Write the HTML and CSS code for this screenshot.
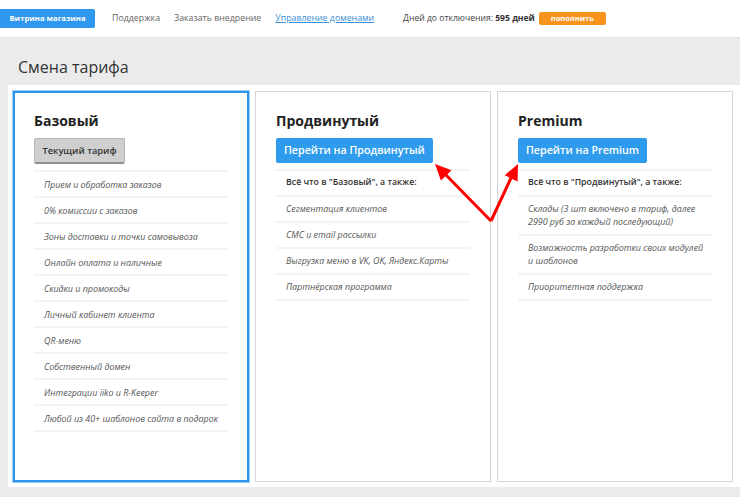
FILE: index.html
```html
<!DOCTYPE html>
<html lang="ru">
<head>
  <meta charset="UTF-8">
  <meta name="viewport" content="width=device-width, initial-scale=1.0">
  <title>Смена тарифа</title>
  <link rel="stylesheet" href="styles.css">
</head>
<body>
  <header class="topbar">
    <a class="brand" href="#">Витрина магазина</a>
    <nav class="menu">
      <a href="#">Поддержка</a>
      <a href="#">Заказать внедрение</a>
      <a class="link" href="#">Управление доменами</a>
    </nav>
    <div class="days">Дней до отключения: <b>595 дней</b></div>
    <a class="topup" href="#">пополнить</a>
  </header>

  <main class="page">
    <h1 class="page-title">Смена тарифа</h1>
    <div class="plans">
      <div class="plan plan-current">
        <h2>Базовый</h2>
        <button class="btn btn-gray">Текущий тариф</button>
        <ul class="features">
          <li>Прием и обработка заказов</li>
          <li>0% комиссии с заказов</li>
          <li>Зоны доставки и точки самовывоза</li>
          <li>Онлайн оплата и наличные</li>
          <li>Скидки и промокоды</li>
          <li>Личный кабинет клиента</li>
          <li>QR-меню</li>
          <li>Собственный домен</li>
          <li>Интеграции iiko и R-Keeper</li>
          <li>Любой из 40+ шаблонов сайта в подарок</li>
        </ul>
      </div>
      <div class="plan">
        <h2>Продвинутый</h2>
        <button class="btn btn-blue">Перейти на Продвинутый</button>
        <ul class="features">
          <li class="lead">Всё что в "Базовый", а также:</li>
          <li>Сегментация клиентов</li>
          <li>СМС и email рассылки</li>
          <li>Выгрузка меню в VK, OK, Яндекс.Карты</li>
          <li>Партнёрская программа</li>
        </ul>
      </div>
      <div class="plan">
        <h2>Premium</h2>
        <button class="btn btn-blue">Перейти на Premium</button>
        <ul class="features">
          <li class="lead">Всё что в "Продвинутый", а также:</li>
          <li>Склады (3 шт включено в тариф, далее 2990 руб за каждый последующий)</li>
          <li>Возможность разработки своих модулей и шаблонов</li>
          <li>Приоритетная поддержка</li>
        </ul>
      </div>
    </div>
  </main>

  <svg class="arrows" width="740" height="497" viewBox="0 0 740 497">
    <line x1="491" y1="221" x2="446" y2="175" />
    <line x1="491" y1="221" x2="511" y2="178" />
    <polygon points="435,164 451.5,170.3 440.9,180.6" />
    <polygon points="518,164 517.6,181.6 504.8,175.3" />
  </svg>
</body>
</html>
```

FILE: styles.css
```css
* {
  box-sizing: border-box;
}
body {
  margin: 0;
  background: #ebebeb;
  font-family: "Open Sans", "Noto Sans", sans-serif;
  color: #333;
  width: 740px;
  height: 497px;
  overflow: hidden;
  position: relative;
}

/* top bar */
.topbar {
  display: flex;
  align-items: center;
  height: 38px;
  background: #fff;
  border-bottom: 1px solid #e2e2e2;
  font-size: 8.8px;
}
.brand {
  display: flex;
  align-items: center;
  justify-content: center;
  width: 95px;
  height: 19px;
  margin-top: -1px;
  background: #2f97ee;
  border-radius: 0 2px 2px 0;
  color: #fff;
  font-size: 7.7px;
  font-weight: 700;
  text-decoration: none;
}
.menu {
  display: flex;
  gap: 14px;
  margin-left: 17px;
  margin-top: -1px;
}
.menu a {
  color: #666;
  text-decoration: none;
}
.menu a.link {
  color: #3a8fd8;
  text-decoration: underline;
}
.days {
  margin-left: 29px;
  margin-top: -1px;
  color: #444;
  font-size: 8.6px;
}
.days b {
  font-weight: 700;
  color: #333;
}
.topup {
  display: flex;
  align-items: center;
  justify-content: center;
  width: 67px;
  height: 13px;
  margin-left: 4px;
  margin-top: -1px;
  background: #f7941d;
  border-radius: 2px;
  color: #fff;
  font-size: 7.5px;
  font-weight: 700;
  text-decoration: none;
}

/* content */
.page-title {
  margin: 0;
  padding: 18px 0 0 18px;
  height: 47px;
  font-size: 16px;
  font-weight: 400;
  color: #333;
}
.plans {
  display: flex;
  gap: 6px;
  margin-left: 8px;
  padding: 6px 5px 5px;
  height: 402px;
  background: #fff;
}
.plan {
  width: 236px;
  height: 391px;
  padding: 19px 20px 0 20px;
  border: 1px solid #d6d6d6;
}
.plan-current {
  padding: 18px 19px 0 19px;
  border: 2px solid #2d95ec;
  box-shadow: 0 0 0 1px #9ccdf6;
}
.plan h2 {
  margin: 0 0 6px;
  font-size: 14px;
  font-weight: 700;
  color: #222;
  line-height: 20px;
}

.btn {
  height: 26px;
  border: none;
  border-radius: 2px;
  font-family: inherit;
  font-weight: 600;
  cursor: pointer;
}
.btn-gray {
  width: 91px;
  padding: 0;
  background: #cfcfcf;
  border: 1px solid #b5b5b5;
  border-bottom: 2px solid #8f8f8f;
  color: #333;
  font-size: 9.3px;
}
.btn-blue {
  height: 25px;
  padding: 0 8px;
  background: #2e9bec;
  color: #fff;
  font-size: 10.7px;
}

.features {
  list-style: none;
  margin: 6px 0 0;
  padding: 0;
  border-top: 2px solid #f3f3f3;
}
.features li {
  padding: 5.5px 4px 5.5px 10px;
  line-height: 13px;
  border-bottom: 2px solid #f3f3f3;
  font-size: 8.9px;
  font-style: italic;
  color: #555;
}
.features li.lead {
  font-style: normal;
  font-weight: 600;
  font-size: 8.8px;
  color: #333;
}

/* red arrows drawn over the page */
.arrows {
  position: absolute;
  left: 0;
  top: 0;
  pointer-events: none;
}
.arrows line {
  stroke: #f00;
  stroke-width: 3;
}
.arrows polygon {
  fill: #f00;
}
```
